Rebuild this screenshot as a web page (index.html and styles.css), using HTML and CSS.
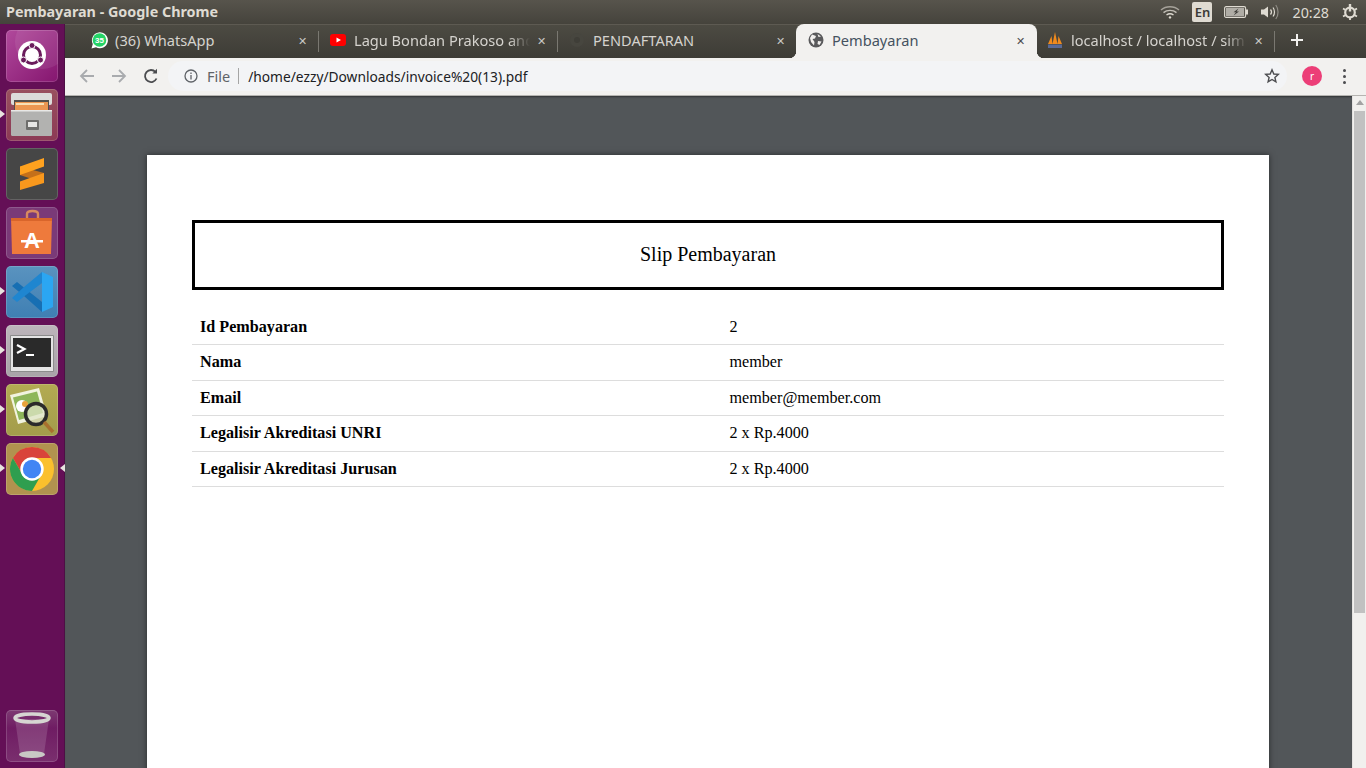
FILE: index.html
```html
<!DOCTYPE html>
<html lang="id">
<head>
    <meta charset="UTF-8">
    <title>Pembayaran - Google Chrome</title>
    <link rel="stylesheet" href="styles.css">
</head>
<body>
    <!-- panel atas ubuntu -->
    <header class="topbar">
        <div class="window-title">Pembayaran - Google Chrome</div>
        <div class="tray">
            <svg class="tray-wifi" width="20" height="14" viewBox="0 0 20 14" fill="none" stroke="#dfdbd2" stroke-width="1.4">
                <path d="M1 5 C6 0.6 14 0.6 19 5" opacity=".6"/>
                <path d="M3.500 7.600 C7.200 4.600 12.800 4.600 16.500 7.600" opacity=".8"/>
                <path d="M6.500 10 C8.500 8.600 11.500 8.600 13.500 10"/>
                <circle cx="10" cy="12.400" r="1.200" fill="#dfdbd2" stroke="none"/>
            </svg>
            <span class="tray-lang">En</span>
            <svg class="tray-battery" width="24" height="12" viewBox="0 0 24 12">
                <rect x=".6" y=".6" width="21" height="10.800" rx="1.500" fill="#56534c" stroke="#dfdbd2" stroke-width="1.100"/>
                <rect x="2" y="2" width="18" height="8" fill="#b0ada6"/>
                <rect x="22" y="3.500" width="2" height="5" fill="#dfdbd2"/>
                <path d="M14.500 2.400 L9.500 6.200 H12 L9.500 9.600 L15 5.400 H12.500 Z" fill="#3c3b37"/>
            </svg>
            <svg class="tray-volume" width="20" height="16" viewBox="0 0 20 16" fill="none">
                <path d="M1 5.500 H4 L8 2.500 V13.500 L4 10.500 H1 Z" fill="#dfdbd2"/>
                <path d="M10.500 5.500 C11.700 7 11.700 9 10.500 10.500" stroke="#dfdbd2" stroke-width="1.300"/>
                <path d="M13 3.500 C15 6 15 10 13 12.500" stroke="#dfdbd2" stroke-width="1.200"/>
                <path d="M15.800 1 C18.800 5 18.800 11 15.800 15" stroke="#8f8c85" stroke-width="1.200"/>
            </svg>
            <span class="tray-clock">20:28</span>
            <svg class="tray-power" width="16" height="16" viewBox="0 0 16 16" fill="none" stroke="#dfdbd2">
                <circle cx="8" cy="8.500" r="4.800" stroke-width="2.200"/>
                <path d="M8 0 V7.500" stroke-width="2.400"/>
                <path d="M8 13 V16 M1 4.500 L3.200 5.800 M15 4.500 L12.800 5.800 M1 12.500 L3.200 11.200 M15 12.500 L12.800 11.200" stroke-width="1.800"/>
            </svg>
        </div>
    </header>

    <div class="desktop">
        <!-- launcher kiri -->
        <nav class="launcher">
            <div class="tile tile-ubuntu">
                <svg width="52" height="52" viewBox="0 0 52 52">
                    <circle cx="36" cy="12" r="27" fill="#fff" opacity=".08"/>
                    <circle cx="26" cy="25" r="14" fill="#fff"/>
                    <circle cx="26" cy="25" r="8.500" fill="none" stroke="#6a1b5c" stroke-width="3"/>
                    <circle cx="26" cy="15.500" r="3" fill="#6a1b5c" stroke="#fff"/>
                    <circle cx="17.500" cy="30" r="3" fill="#6a1b5c" stroke="#fff"/>
                    <circle cx="34.500" cy="30" r="3" fill="#6a1b5c" stroke="#fff"/>
                </svg>
            </div>
            <div class="tile tile-files running">
                <svg width="52" height="52" viewBox="0 0 52 52">
                    <rect x="5" y="4" width="41" height="12" rx="2" fill="#dcdcda"/>
                    <rect x="8" y="11" width="35" height="12" fill="#55504b"/>
                    <rect x="9" y="13" width="33" height="9" fill="#ec9650"/>
                    <rect x="10" y="14" width="28" height="2" fill="#f8dfb4"/>
                    <rect x="5" y="21" width="41" height="26" rx="1.500" fill="#b2b2b0"/>
                    <rect x="5" y="21" width="41" height="1.500" fill="#e8e8e6"/>
                    <rect x="20" y="31" width="13" height="10" rx="1" fill="#6e6e6c"/>
                    <rect x="22" y="33" width="9" height="5" fill="#e6e6e4"/>
                </svg>
            </div>
            <div class="tile tile-sublime">
                <svg width="52" height="52" viewBox="0 0 52 52">
                    <path d="M14 18.500 L38 25 V35 L14 27 Z" fill="#c4701a"/>
                    <path d="M14 18.500 L38 10 V18.500 L14 27 Z" fill="#ffa21f"/>
                    <path d="M14 33.500 L38 25 V35 L14 42 Z" fill="#f8981d"/>
                </svg>
            </div>
            <div class="tile tile-store">
                <svg width="52" height="52" viewBox="0 0 52 52">
                    <path d="M21 14 V7 C21 3 32 3 32 7 V14" fill="none" stroke="#d88a5f" stroke-width="2.400"/>
                    <path d="M5 11 H46 L45 47 H6 Z" fill="#ee7a3c"/>
                    <rect x="5" y="11" width="41" height="3" fill="#d9652b"/>
                    <text x="26" y="41" class="store-letter">A</text>
                    <rect x="15" y="33" width="22" height="2.500" fill="#fff"/>
                </svg>
            </div>
            <div class="tile tile-vscode running">
                <svg width="52" height="52" viewBox="0 0 52 52">
                    <path d="M6 20 L11 16 L36 36 V46 L18 30 Z" fill="#176fb3"/>
                    <path d="M36 6 V17 L20 29 L11 36 L6 32 L18 21 Z" fill="#1f86d0"/>
                    <path d="M36 6 L47 11 V41 L36 46 Z" fill="#2ba6f2"/>
                </svg>
            </div>
            <div class="tile tile-terminal running">
                <svg width="52" height="52" viewBox="0 0 52 52">
                    <rect x="4" y="10" width="44" height="37" rx="1" fill="#8c8c8c"/>
                    <rect x="5" y="11" width="42" height="35" fill="#e4e4e4"/>
                    <rect x="7" y="13" width="38" height="29" fill="#2a2a2a"/>
                    <path d="M11 20 L18.500 24 L11 28" fill="none" stroke="#fff" stroke-width="2.200"/>
                    <rect x="20" y="29" width="8" height="2" fill="#fff"/>
                </svg>
            </div>
            <div class="tile tile-viewer running">
                <svg width="52" height="52" viewBox="0 0 52 52">
                    <path d="M4 11 L33 4 L41 32 L12 40 Z" fill="#f1f3df"/>
                    <path d="M7 13.500 L31 7.500 L37 29 L13 36 Z" fill="#8eb65a"/>
                    <circle cx="16" cy="22" r="6" fill="#fff"/>
                    <circle cx="19" cy="20" r="3" fill="#e8a23a"/>
                    <circle cx="30" cy="30" r="10.500" fill="#dfe6c8" fill-opacity=".75" stroke="#2b2b2b" stroke-width="3.500"/>
                    <path d="M38 38 L47 48" stroke="#a8702e" stroke-width="3.500"/>
                </svg>
            </div>
            <div class="tile tile-chrome running focused">
                <svg width="52" height="52" viewBox="0 0 52 52">
                    <g transform="translate(26 26) scale(.936) translate(-26 -26)">
                        <circle cx="26" cy="26" r="23.500" fill="#fbc02d"/>
                        <path d="M5.600 14.300 A23.500 23.500 0 0 1 46.400 14.300 L26 14.300 A11.700 11.700 0 0 0 15.900 32 Z" fill="#d9433a"/>
                        <path d="M5.600 14.300 A23.500 23.500 0 0 0 26 49.500 L36.100 32 A11.700 11.700 0 0 1 15.900 32 Z" fill="#2f9e4f"/>
                        <circle cx="26" cy="26" r="12.500" fill="#fff"/>
                        <circle cx="26" cy="26" r="9.800" fill="#4285f4"/>
                    </g>
                </svg>
            </div>
            <div class="tile tile-trash">
                <svg width="52" height="52" viewBox="0 0 52 52">
                    <path d="M9 9 L14 44 C18 48 34 48 38 44 L43 9 Z" fill="#fff" opacity=".14"/>
                    <ellipse cx="26" cy="44.500" rx="13" ry="3.500" fill="#c9c9c5"/>
                    <ellipse cx="26" cy="8" rx="17" ry="4" fill="none" stroke="#d6d6d2" stroke-width="3.500"/>
                </svg>
            </div>
        </nav>

        <div class="browser">
            <!-- tab chrome -->
            <div class="tabstrip">
                <div class="tab tab-sep">
                    <svg class="tab-icon icon-wide" width="17" height="17" viewBox="0 0 17 17">
                        <path d="M0.500 16.500 L1.800 12 A8 8 0 1 1 5 15.300 Z" fill="#fff"/>
                        <circle cx="8.500" cy="8" r="6.800" fill="#25d366"/>
                        <text x="8.500" y="10.800" class="wa-badge">35</text>
                    </svg>
                    <span class="tab-title">(36) WhatsApp</span>
                    <span class="tab-close">✕</span>
                </div>
                <div class="tab tab-sep">
                    <svg class="tab-icon icon-wide" width="17" height="12" viewBox="0 0 17 12">
                        <rect width="16" height="12" rx="3" fill="#f00"/>
                        <path d="M6.500 3.500 L11 6 L6.500 8.500 Z" fill="#fff"/>
                    </svg>
                    <span class="tab-title tab-fade">Lagu Bondan Prakoso and</span>
                    <span class="tab-close">✕</span>
                </div>
                <div class="tab">
                    <svg class="tab-icon" width="16" height="16" viewBox="0 0 16 16">
                        <circle cx="8" cy="8" r="7" fill="#47463f"/>
                        <circle cx="8" cy="8" r="3" fill="#3f3e38"/>
                    </svg>
                    <span class="tab-title">PENDAFTARAN</span>
                    <span class="tab-close">✕</span>
                </div>
                <div class="tab tab-active">
                    <svg class="tab-icon" width="16" height="16" viewBox="0 0 16 16">
                        <circle cx="8" cy="8" r="7.500" fill="#5a5a5c"/>
                        <path d="M4 2.500 L8 4 L7 6.500 L4.500 7 L6.500 10 L6 13.500 L3 10 L2 6 Z M10 9 L13.500 9.500 L11.500 13 L9.500 12 Z M9.500 2 L13 4.500 L10.500 5 Z" fill="#f2f0ee"/>
                    </svg>
                    <span class="tab-title">Pembayaran</span>
                    <span class="tab-close">✕</span>
                </div>
                <div class="tab tab-sep">
                    <svg class="tab-icon" width="16" height="18" viewBox="0 0 16 18">
                        <path d="M1 13 L4.500 5 L5.500 13 Z M5.500 13 L8 1 L10.500 13 Z M10.500 13 L11.500 5 L15 13 Z" fill="#f08a1d"/>
                        <rect x="1" y="13.500" width="14" height="3.500" fill="#5a6a96"/>
                    </svg>
                    <span class="tab-title tab-fade">localhost / localhost / sim</span>
                    <span class="tab-close">✕</span>
                </div>
                <span class="new-tab">
                    <svg width="12" height="12" viewBox="0 0 12 12" fill="none" stroke="#f2f1ef" stroke-width="2">
                        <path d="M6 0 V12 M0 6 H12"/>
                    </svg>
                </span>
            </div>

            <div class="toolbar">
                <svg class="nav-btn" width="18" height="18" viewBox="0 0 18 18" fill="none" stroke="#a9abae" stroke-width="1.800">
                    <path d="M16 9 H3 M9 3 L3 9 L9 15"/>
                </svg>
                <svg class="nav-btn" width="18" height="18" viewBox="0 0 18 18" fill="none" stroke="#a9abae" stroke-width="1.800">
                    <path d="M2 9 H15 M9 3 L15 9 L9 15"/>
                </svg>
                <svg class="nav-btn" width="18" height="18" viewBox="0 0 18 18" fill="none" stroke="#4b4c4f" stroke-width="1.800">
                    <path d="M14.500 11.500 A6 6 0 1 1 13.500 5"/>
                    <path d="M15 1.800 V6.500 H10.300 Z" fill="#4b4c4f" stroke="none"/>
                </svg>
                <div class="omnibox">
                    <svg width="14" height="14" viewBox="0 0 14 14" fill="none" stroke="#5f6368" stroke-width="1.300">
                        <circle cx="7" cy="7" r="6"/>
                        <path d="M7 6 V10.500 M7 3.400 V4.900"/>
                    </svg>
                    <span class="omni-file">File</span>
                    <span class="omni-url">/home/ezzy/Downloads/invoice%20(13).pdf</span>
                    <svg class="star" width="16" height="16" viewBox="0 0 16 16" fill="none" stroke="#4b4c4f" stroke-width="1.400">
                        <path d="M8 1.800 L9.800 6 L14.300 6.400 L10.900 9.400 L11.900 13.900 L8 11.500 L4.100 13.900 L5.100 9.400 L1.700 6.400 L6.200 6 Z"/>
                    </svg>
                </div>
                <span class="avatar">r</span>
                <span class="menu-dots"><i></i><i></i><i></i></span>
            </div>

            <div class="viewer-wrap">
                <main class="viewer">
                    <div class="pdf-page">
                        <div class="slip-title">Slip Pembayaran</div>
                        <table class="slip-table">
                            <tr><th>Id Pembayaran</th><td>2</td></tr>
                            <tr><th>Nama</th><td>member</td></tr>
                            <tr><th>Email</th><td>member@member.com</td></tr>
                            <tr><th>Legalisir Akreditasi UNRI</th><td>2 x Rp.4000</td></tr>
                            <tr><th>Legalisir Akreditasi Jurusan</th><td>2 x Rp.4000</td></tr>
                        </table>
                    </div>
                </main>
                <div class="scrollbar">
                    <span class="scroll-up"></span>
                    <span class="scroll-thumb"></span>
                </div>
            </div>
        </div>
    </div>
</body>
</html>
```

FILE: styles.css
```css
* {
    box-sizing: border-box;
}

html, body {
    height: 768px;
    margin: 0;
    padding: 0;
    overflow: hidden;
}

body {
    display: flex;
    flex-direction: column;
    font-family: "Noto Sans", "Open Sans", sans-serif;
    background-color: #525659;
}

/* panel atas */
.topbar {
    height: 24px;
    flex: none;
    display: flex;
    align-items: center;
    justify-content: space-between;
    padding-left: 6px;
    background: linear-gradient(#57544c, #45433c);
    color: #dfdbd2;
}

.window-title {
    padding-bottom: 1px;
    font-size: 14.35px;
    font-weight: 700;
}

.tray {
    display: flex;
    align-items: center;
    height: 24px;
}

.tray-wifi {
    margin-right: 12px;
}

.tray-lang {
    width: 20px;
    height: 20px;
    margin-right: 12px;
    border-radius: 2px;
    background-color: #dfdbd2;
    color: #3c3b37;
    font-size: 13px;
    font-weight: 600;
    line-height: 20px;
    text-align: center;
}

.tray-battery {
    margin-right: 12px;
}

.tray-volume {
    margin-right: 12px;
}

.tray-clock {
    font-size: 14.3px;
    margin-right: 13px;
}

.tray-power {
    margin-right: 8px;
}

.desktop {
    flex: 1;
    min-height: 0;
    display: flex;
}

/* launcher */
.launcher {
    width: 65px;
    flex: none;
    display: flex;
    flex-direction: column;
    gap: 7px;
    padding: 6px 0 6px 6px;
    background-color: #640f56;
    border-right: 1px solid #4d0f45;
}

.tile {
    position: relative;
    width: 52px;
    height: 52px;
    border-radius: 5px;
    box-shadow: inset 0 0 0 1px rgba(255, 255, 255, 0.16);
}

.tile svg {
    display: block;
}

.tile.running::before {
    content: "";
    position: absolute;
    left: -6px;
    top: 21px;
    border-left: 5px solid #e8e4df;
    border-top: 4px solid transparent;
    border-bottom: 4px solid transparent;
}

.tile.focused::after {
    content: "";
    position: absolute;
    right: -7px;
    top: 21px;
    border-right: 5px solid #e8e4df;
    border-top: 4px solid transparent;
    border-bottom: 4px solid transparent;
}

.tile-ubuntu {
    background: linear-gradient(135deg, #b14a9c, #85166f);
}

.tile-files {
    background: linear-gradient(#99505f, #8c3a55);
}

.tile-sublime {
    background-color: #464646;
}

.tile-store {
    background-color: #7a3a78;
}

.tile-vscode {
    background: linear-gradient(#5a93bf, #3f7fb3);
}

.tile-terminal {
    background: linear-gradient(#bdb5bb, #a8a4a8);
}

.tile-viewer {
    background: linear-gradient(#b3ab52, #a39c4b);
}

.tile-chrome {
    background-color: #b1924f;
}

.tile-trash {
    margin-top: auto;
    background: linear-gradient(#7d3a72, #6f1c63 35%, #7a2f6e);
}

.store-letter {
    font-family: "Liberation Sans", sans-serif;
    font-size: 22px;
    font-weight: 700;
    fill: #fff;
    text-anchor: middle;
}

.wa-badge {
    font-family: "Liberation Sans", sans-serif;
    font-size: 8px;
    font-weight: 700;
    fill: #fff;
    text-anchor: middle;
}

.browser {
    flex: 1;
    min-width: 0;
    display: flex;
    flex-direction: column;
}

/* tab */
.tabstrip {
    height: 34px;
    flex: none;
    display: flex;
    align-items: stretch;
    padding-left: 15px;
    background: linear-gradient(#4d4b43, #3d3c36);
    box-shadow: inset 0 1px 0 #5d5a52;
    color: #d5d3ce;
}

.tab {
    position: relative;
    width: 239px;
    flex: none;
    display: flex;
    align-items: center;
    padding: 0 10px 2px 11px;
    font-size: 14.6px;
}

.tab-sep::after {
    content: "";
    position: absolute;
    right: 0;
    top: 7px;
    width: 1px;
    height: 21px;
    background-color: #7a7871;
}

.tab-active {
    width: 241px;
    margin: 0 -1px;
    padding-left: 12px;
    background-color: #f2f1ef;
    border-radius: 8px 8px 0 0;
    color: #45525f;
}

/* lengkungan bawah tab aktif */
.tab-active::before, .tab-active::after {
    content: "";
    position: absolute;
    bottom: 0;
    width: 7px;
    height: 7px;
}

.tab-active::before {
    left: -7px;
    background: radial-gradient(circle at 0 0, transparent 7px, #f2f1ef 7.5px);
}

.tab-active::after {
    right: -7px;
    background: radial-gradient(circle at 100% 0, transparent 7px, #f2f1ef 7.5px);
}

.tab-icon {
    flex: none;
    margin-right: 8px;
}

.tab-icon.icon-wide {
    margin-right: 7px;
}

.tab-title {
    flex: 1;
    min-width: 0;
    overflow: hidden;
    white-space: nowrap;
}

.tab-fade {
    -webkit-mask-image: linear-gradient(to right, #000 88%, transparent);
    mask-image: linear-gradient(to right, #000 88%, transparent);
}

.tab-close {
    flex: none;
    width: 14px;
    margin-left: 4px;
    font-size: 11px;
    text-align: center;
    color: #c9c8c4;
}

.tab-active .tab-close {
    color: #4b4c4f;
}

.new-tab {
    display: flex;
    align-items: center;
    margin-left: 16px;
    padding-bottom: 2px;
}

/* toolbar */
.toolbar {
    height: 38px;
    flex: none;
    display: flex;
    align-items: center;
    padding: 0 12px 1px 13px;
    background-color: #f2f1ef;
    border-bottom: 1px solid #b5b4b1;
}

.nav-btn {
    margin-right: 14px;
}

.omnibox {
    width: 1119px;
    flex: none;
    display: flex;
    align-items: center;
    height: 30px;
    margin-left: -6px;
    padding-left: 16px;
    padding-right: 7px;
    border-radius: 15px;
    background-color: #f3f4f6;
    font-size: 14.5px;
}

.omni-file {
    margin-left: 9px;
    padding-right: 8px;
    border-right: 1px solid #a5a5a5;
    line-height: 16px;
    color: #5f6368;
}

.omni-url {
    margin-left: 9px;
    font-size: 13.75px;
    color: #202124;
}

.star {
    margin-left: auto;
}

.avatar {
    width: 20px;
    height: 20px;
    margin-left: 15px;
    border-radius: 50%;
    background-color: #ec3e77;
    color: #fff;
    font-size: 10px;
    line-height: 20px;
    text-align: center;
}

.menu-dots {
    display: flex;
    flex-direction: column;
    gap: 3px;
    margin-left: 21px;
}

.menu-dots i {
    width: 3px;
    height: 3px;
    border-radius: 50%;
    background-color: #4b4c4f;
}

/* pdf viewer */
.viewer-wrap {
    flex: 1;
    min-height: 0;
    display: flex;
}

.viewer {
    flex: 1;
    min-width: 0;
    display: flex;
    justify-content: center;
    padding: 59px 1px 0 0;
    overflow: hidden;
    background-color: #525659;
    box-shadow: inset 0 2px 2px -1px rgba(0, 0, 0, 0.4);
}

.pdf-page {
    width: 1122px;
    height: 760px;
    flex: none;
    padding: 65px 45px 0;
    background-color: #fff;
    box-shadow: 0 0 6px rgba(0, 0, 0, 0.5);
    font-family: "Liberation Serif", serif;
    color: #000;
}

.slip-title {
    height: 70px;
    border: 3px solid #000;
    font-size: 20px;
    line-height: 62px;
    text-align: center;
}

.slip-table {
    width: 100%;
    margin-top: 19px;
    border-collapse: collapse;
}

.slip-table tr {
    height: 35.5px;
}

.slip-table th, .slip-table td {
    padding: 0 8px;
    border-bottom: 1px solid #ddd;
    text-align: left;
    font-size: 16.15px;
    line-height: 18px;
}

.slip-table th {
    width: 530px;
    padding-right: 0;
}

.slip-table td {
    padding-left: 7.5px;
}

.scrollbar {
    width: 14px;
    flex: none;
    display: flex;
    flex-direction: column;
    align-items: center;
    background-color: #f1f0ee;
    border-left: 1px solid #e4e3e1;
}

.scroll-up {
    margin-top: 4px;
    border-bottom: 5px solid #a3a3a3;
    border-left: 4px solid transparent;
    border-right: 4px solid transparent;
}

.scroll-thumb {
    width: 11px;
    height: 502px;
    margin-top: 6px;
    background-color: #c1c1c1;
}
```
